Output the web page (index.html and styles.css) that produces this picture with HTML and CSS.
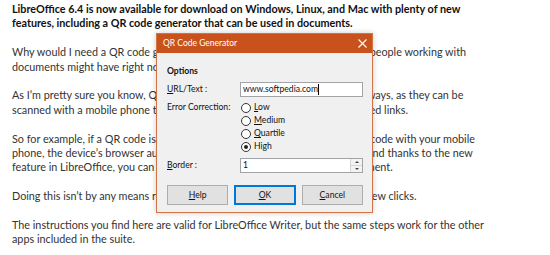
FILE: index.html
```html
<!DOCTYPE html>
<html lang="en">
<head>
    <meta charset="UTF-8">
    <meta name="viewport" content="width=device-width, initial-scale=1.0">
    <title>LibreOffice 6.4 QR Code Generator</title>
    <link rel="stylesheet" href="styles.css">
</head>
<body>
    <div class="article">
        <p class="lead">LibreOffice 6.4 is now available for download on Windows, Linux, and Mac with plenty of new<br>features, including a QR code generator that can be used in documents.</p>
        <p>Why would I need a QR code generator in LibreOffice, you might ask? Well, people working with<br>documents might have right now a link they want to share.</p>
        <p>As I’m pretty sure you know, QR codes are used nowadays in many distinct ways, as they can be<br>scanned with a mobile phone to quickly access the information and embedded links.</p>
        <p>So for example, if a QR code is embedded in a document, and you scan that code with your mobile<br>phone, the device’s browser automatically navigates to the embedded link. And thanks to the new<br>feature in LibreOffice, you can now generate such a QR code for each document.</p>
        <p>Doing this isn’t by any means rocket science, and it basically only requires a few clicks.</p>
        <p>The instructions you find here are valid for LibreOffice Writer, but the same steps work for the other<br>apps included in the suite.</p>
    </div>

    <!-- Dialoog ligt over de tekst -->
    <div class="dialog">
        <div class="dialog-title">
            <span>QR Code Generator</span>
            <svg class="close-icon" width="9" height="9" viewBox="0 0 9 9">
                <path d="M0.5 0.5 L8.5 8.5 M8.5 0.5 L0.5 8.5" stroke="#fff" stroke-width="1.1" fill="none"/>
            </svg>
        </div>
        <div class="dialog-body">
            <div class="section-title">Options</div>
            <div class="form-grid">
                <label class="field-label"><u>U</u>RL/Text :</label>
                <div class="text-box">www.softpedia.com<span class="caret"></span></div>

                <label class="field-label field-top">Error Correction:</label>
                <div class="radio-list">
                    <div class="radio"><span class="radio-circle"></span><span><u>L</u>ow</span></div>
                    <div class="radio"><span class="radio-circle"></span><span><u>M</u>edium</span></div>
                    <div class="radio"><span class="radio-circle"></span><span><u>Q</u>uartile</span></div>
                    <div class="radio"><span class="radio-circle checked"></span><span>High</span></div>
                </div>

                <label class="field-label"><u>B</u>order :</label>
                <div class="text-box spin-box">
                    <span>1</span>
                    <span class="spinner">
                        <span class="spin-btn"><span class="arrow-up"></span></span>
                        <span class="spin-btn"><span class="arrow-down"></span></span>
                    </span>
                </div>
            </div>
            <div class="button-row">
                <button class="btn"><u>H</u>elp</button>
                <button class="btn btn-default"><u>O</u>K</button>
                <button class="btn"><u>C</u>ancel</button>
            </div>
        </div>
    </div>
</body>
</html>
```

FILE: styles.css
```css
body {
    margin: 0;
    padding: 2px 12px 0;
    font-family: Lato, "Liberation Sans", sans-serif;
    font-size: 10.8px;
    line-height: 14.4px;
    color: #333;
    background: #fff;
    overflow: hidden;
}

.article p {
    margin: 0 0 14.4px;
    white-space: nowrap;
}

.article .lead {
    font-weight: bold;
    color: #111;
}

/* Dialoog */
.dialog {
    position: absolute;
    left: 156px;
    top: 33px;
    width: 217px;
    height: 180px;
    box-sizing: border-box;
    border: 1px solid #d27445;
    background: #f0f0f0;
    box-shadow: 0 0 6px rgba(0,0,0,0.2);
    font-family: Lato, "Liberation Sans", sans-serif;
    font-size: 8.6px;
    color: #111;
}

.dialog-title {
    display: flex;
    justify-content: space-between;
    align-items: center;
    height: 19px;
    padding: 0 5px 0 6px;
    background: #c9521c;
    color: #fff;
    font-size: 8.5px;
}

.dialog-body {
    padding: 12px 9px 6px 10px;
}

.section-title {
    font-weight: bold;
    line-height: 13px;
    margin-bottom: 4px;
}

.form-grid {
    display: grid;
    grid-template-columns: 73px 1fr;
    row-gap: 4px;
}

.field-label {
    align-self: center;
    line-height: 13px;
}

.field-label.field-top {
    align-self: start;
}

.text-box {
    height: 15px;
    box-sizing: border-box;
    border: 1px solid #a2a4a8;
    background: #fff;
    padding-left: 2px;
    line-height: 13px;
    display: flex;
    align-items: center;
}

.caret {
    display: inline-block;
    width: 1px;
    height: 11px;
    background: #000;
}

.spin-box {
    justify-content: space-between;
    padding-right: 0;
}

.spinner {
    display: flex;
    flex-direction: column;
    width: 11px;
    height: 13px;
    border-left: 1px solid #d6d6d6;
}

.spin-btn {
    flex: 1;
    display: flex;
    align-items: center;
    justify-content: center;
    background: #f3f3f3;
    border-bottom: 1px solid #d6d6d6;
}

.spin-btn:last-child {
    border-bottom: none;
}

.arrow-up,
.arrow-down {
    width: 0;
    height: 0;
    border-left: 2px solid transparent;
    border-right: 2px solid transparent;
}

.arrow-up {
    border-bottom: 2px solid #444;
}

.arrow-down {
    border-top: 2px solid #444;
}

.radio-list {
    margin-bottom: 1px;
}

.radio {
    display: flex;
    align-items: center;
    gap: 3px;
    height: 13px;
}

.radio-circle {
    width: 10px;
    height: 10px;
    box-sizing: border-box;
    margin-left: 1px;
    border: 1px solid #333;
    border-radius: 50%;
    background: #fff;
    display: flex;
    align-items: center;
    justify-content: center;
}

.radio-circle.checked::after {
    content: "";
    width: 4px;
    height: 4px;
    border-radius: 50%;
    background: #222;
}

.button-row {
    display: flex;
    gap: 6px;
    margin-top: 12px;
}

.btn {
    flex: 1;
    height: 20px;
    padding: 0;
    border: 1px solid #adadad;
    background: #e1e1e1;
    font-family: inherit;
    font-size: 8.6px;
    color: #111;
}

.btn-default {
    border-color: #0078d7;
    box-shadow: inset 0 0 0 1px #0078d7;
}
```
